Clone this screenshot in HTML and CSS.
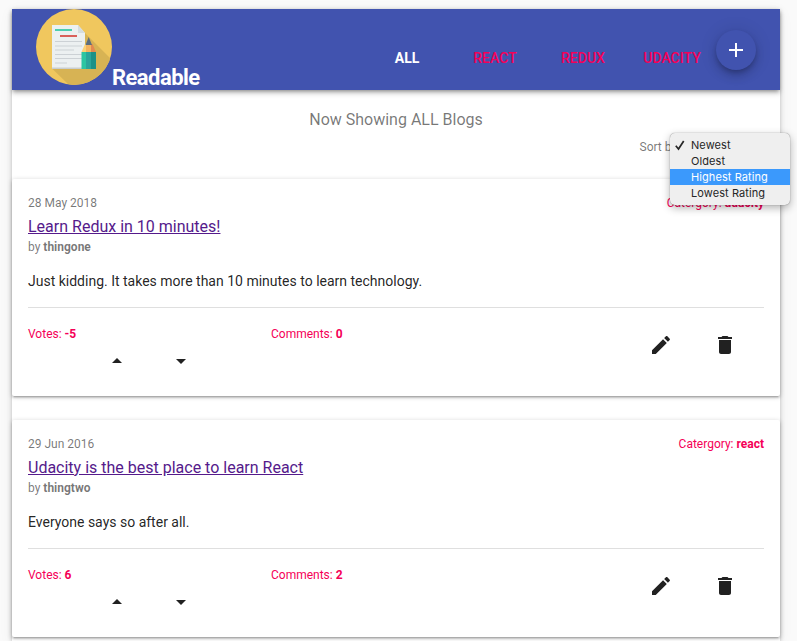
FILE: index.html
```html
<!DOCTYPE html>
<html lang="en">
<head>
<meta charset="utf-8">
<title>Readable</title>
<link rel="stylesheet" href="styles.css">
</head>
<body>
<svg class="defs" aria-hidden="true">
  <symbol id="up" viewBox="0 0 24 24"><path d="M7 14l5-5 5 5z"/></symbol>
  <symbol id="down" viewBox="0 0 24 24"><path d="M7 10l5 5 5-5z"/></symbol>
  <symbol id="edit" viewBox="0 0 24 24"><path d="M3 17.25V21h3.75L17.81 9.94l-3.75-3.75L3 17.25zM20.71 7.04c.39-.39.39-1.02 0-1.41l-2.34-2.34c-.39-.39-1.02-.39-1.41 0l-1.83 1.83 3.75 3.75 1.83-1.83z"/></symbol>
  <symbol id="trash" viewBox="0 0 24 24"><path d="M6 19c0 1.100.9 2 2 2h8c1.100 0 2-.9 2-2V7H6v12zM19 4h-3.500l-1-1h-5l-1 1H5v2h14V4z"/></symbol>
</svg>
<main class="page">
  <header class="bar">
    <svg class="logo" viewBox="0 0 76 76">
      <defs><clipPath id="disc"><circle cx="38" cy="38" r="38"/></clipPath></defs>
      <circle cx="38" cy="38" r="38" fill="#f0c75e"/>
      <path clip-path="url(#disc)" d="M42 17L76 51V76H33L16 59.500Z" fill="#d7b354"/>
      <path d="M16 16H42L49 24V60H16Z" fill="#ecf0f1"/>
      <path d="M42 16V24H49Z" fill="#d5dde0"/>
      <path d="M16 58.500H49V60H16Z" fill="#c9ced0"/>
      <path d="M19 20H36V22H19Z" fill="#4ecdb0"/>
      <path d="M24 26H41V28H24Z" fill="#d9605a"/>
      <path d="M19 32H46V33H19ZM19 36.500H46V37.500H19ZM19 40.500H38V41.500H19ZM19 45H46V46H19ZM19 49H46V50H19ZM19 53.500H31V54.500H19Z" fill="#ccd1d5"/>
      <path d="M45.500 43L49 35H52.500V43Z" fill="#fbd277"/>
      <path d="M50 43V35H55V43Z" fill="#f4b45f"/>
      <path d="M55 43V35H56.500L60 43Z" fill="#e2894f"/>
      <path d="M52.700 28L56 36H49.500Z" fill="#5d6d7e"/>
      <path d="M45.500 43H50V60H45.500Z" fill="#2cc5a2"/>
      <path d="M50 43H55V60H50Z" fill="#2ba59b"/>
      <path d="M55 43H60V60H55Z" fill="#1d9187"/>
    </svg>
    <h1 class="brand">Readable</h1>
    <nav class="tabs">
      <a class="tab tab-active">ALL</a>
      <a class="tab">REACT</a>
      <a class="tab">REDUX</a>
      <a class="tab">UDACITY</a>
    </nav>
    <button class="add" aria-label="Add"><svg viewBox="0 0 24 24"><path d="M19 13h-6v6h-2v-6H5v-2h6V5h2v6h6v2z"/></svg></button>
  </header>

  <section class="intro">
    <h2 class="showing">Now Showing ALL Blogs</h2>
    <div class="sort">Sort by:
      <div class="menu">
        <div class="option"><svg class="check" viewBox="0 0 12 12"><path d="M1.800 6.800L4.500 10L9.700 2"/></svg>Newest</div>
        <div class="option">Oldest</div>
        <div class="option option-on">Highest Rating</div>
        <div class="option">Lowest Rating</div>
      </div>
    </div>
  </section>

  <article class="card">
    <div class="meta"><span>28 May 2018</span><span class="pink">Catergory: <b>udacity</b></span></div>
    <a class="title" href="#one">Learn Redux in 10 minutes!</a>
    <div class="by">by <b>thingone</b></div>
    <p class="text">Just kidding. It takes more than 10 minutes to learn technology.</p>
    <footer class="foot">
      <div class="votes pink">Votes: <b>-5</b><div class="arrows"><svg><use href="#up"/></svg><svg><use href="#down"/></svg></div></div>
      <div class="comments pink">Comments: <b>0</b></div>
      <div class="actions"><svg><use href="#edit"/></svg><svg><use href="#trash"/></svg></div>
    </footer>
  </article>

  <article class="card">
    <div class="meta"><span>29 Jun 2016</span><span class="pink">Catergory: <b>react</b></span></div>
    <a class="title" href="#two">Udacity is the best place to learn React</a>
    <div class="by">by <b>thingtwo</b></div>
    <p class="text">Everyone says so after all.</p>
    <footer class="foot">
      <div class="votes pink">Votes: <b>6</b><div class="arrows"><svg><use href="#up"/></svg><svg><use href="#down"/></svg></div></div>
      <div class="comments pink">Comments: <b>2</b></div>
      <div class="actions"><svg><use href="#edit"/></svg><svg><use href="#trash"/></svg></div>
    </footer>
  </article>
</main>
</body>
</html>
```
FILE: styles.css
```css
* { box-sizing: border-box; }
body {
  margin: 0;
  padding: 9px 0 0 12px;
  background: #fafafa;
  font-family: Roboto, "Liberation Sans", sans-serif;
  font-size: 12px;
  color: rgba(0, 0, 0, .54);
}
.defs { display: none; }
b { font-weight: 700; }
.page {
  width: 768px;
  height: 632px;
  background: #fff;
  box-shadow: 0 1px 5px rgba(0, 0, 0, .2), 0 2px 2px rgba(0, 0, 0, .06), 0 3px 14px rgba(0, 0, 0, .06);
}
.bar {
  display: flex;
  height: 81px;
  padding-left: 24px;
  background: #4153af;
  box-shadow: 0 2px 4px -1px rgba(0, 0, 0, .4), 0 4px 5px rgba(0, 0, 0, .14);
}
.logo { width: 76px; height: 76px; }
.brand {
  width: 251px;
  margin: 56px 0 0;
  font-size: 22px;
  font-weight: 700;
  letter-spacing: -.55px;
  line-height: 25px;
  color: #fff;
}
.tabs { display: flex; padding-top: 40px; }
.tab {
  width: 88px;
  font-size: 14px;
  font-weight: 500;
  line-height: 18px;
  text-align: center;
  color: #f50057;
}
.tab-active { font-weight: 700; color: #fff; }
.tab:last-child { width: 90px; }
.add {
  width: 40px;
  height: 40px;
  margin: 21px 0 0 -1px;
  padding: 8px;
  border: 0;
  border-radius: 50%;
  background: #4153af;
  box-shadow: 0 3px 5px -1px rgba(0, 0, 0, .2), 0 6px 10px rgba(0, 0, 0, .14), 0 1px 18px rgba(0, 0, 0, .12);
}
.add svg { display: block; width: 24px; height: 24px; fill: #fff; }
.intro { height: 89px; padding-top: 18px; }
.showing {
  margin: 0;
  font-size: 16px;
  font-weight: 400;
  line-height: 24px;
  text-align: center;
}
.sort {
  position: relative;
  height: 16px;
  margin-top: 7px;
  padding-left: 627.5px;
  line-height: 16px;
}
.menu {
  position: absolute;
  top: -6px;
  left: 658px;
  z-index: 2;
  width: 120px;
  height: 72px;
  padding: 4px 0;
  border-radius: 5px;
  background: #efefef;
  box-shadow: 0 0 1px rgba(0, 0, 0, .55), 0 3px 8px rgba(0, 0, 0, .3);
  font-family: Inter, sans-serif;
  font-size: 11px;
  letter-spacing: .08px;
  color: #262626;
}
.option { position: relative; height: 16px; padding-left: 21px; line-height: 16px; }
.option-on { background: #3b99fc; color: #fff; }
.check {
  position: absolute;
  left: 4px;
  top: 2px;
  width: 12px;
  height: 12px;
  fill: none;
  stroke: #262626;
  stroke-width: 1.7;
}
.card {
  height: 217px;
  padding: 16px 16px 0;
  border-radius: 2px;
  background: #fff;
  box-shadow: 0 1px 5px rgba(0, 0, 0, .2), 0 2px 2px rgba(0, 0, 0, .14), 0 3px 1px -2px rgba(0, 0, 0, .12);
}
.card + .card { margin-top: 24px; }
.meta { display: flex; justify-content: space-between; line-height: 16px; }
.pink { color: #f50057; }
.title {
  display: block;
  width: max-content;
  margin-top: 4px;
  font-size: 16px;
  line-height: 24px;
  color: #551a8b;
}
.by { line-height: 16px; }
.text {
  margin: 16px 0;
  font-size: 14px;
  line-height: 20px;
  color: rgba(0, 0, 0, .87);
}
.foot {
  display: flex;
  height: 89px;
  padding-top: 18px;
  border-top: 1px solid #dfdfdf;
  line-height: 16px;
}
.votes { width: 243px; }
.arrows { display: flex; gap: 40px; margin: 7px 0 0 77px; }
.arrows svg, .actions svg { width: 24px; height: 24px; fill: #212121; }
.comments { width: 378px; }
.actions { display: flex; gap: 40px; padding-top: 7px; }
```
